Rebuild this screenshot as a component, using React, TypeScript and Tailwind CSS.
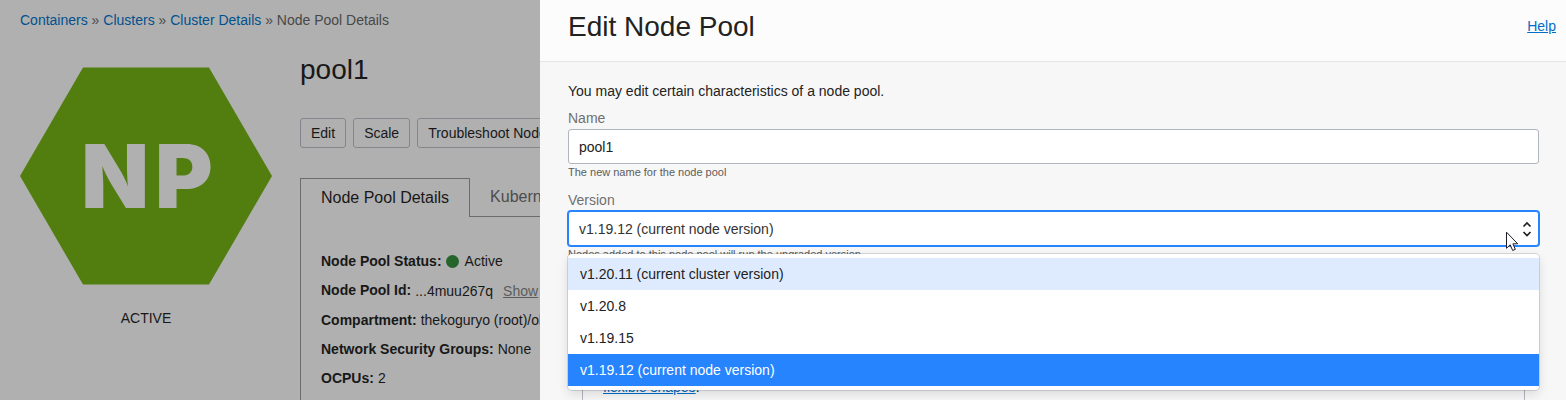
import React, { useState } from "react";

const versions = [
  "v1.20.11 (current cluster version)",
  "v1.20.8",
  "v1.19.15",
  "v1.19.12 (current node version)",
];

function Breadcrumbs() {
  return (
    <nav aria-label="Breadcrumb" className="whitespace-nowrap pl-5 pt-2.5 leading-5 text-[#484848]">
      <a href="#containers" className="text-[#02508e]">Containers</a> »{" "}
      <a href="#clusters" className="text-[#02508e]">Clusters</a> »{" "}
      <a href="#cluster" className="text-[#02508e]">Cluster Details</a> » <span>Node Pool Details</span>
    </nav>
  );
}

function StatusBadge() {
  return (
    <div className="w-[252px] shrink-0 pt-[37px] text-center">
      <svg viewBox="0 0 252 218" className="block w-full">
        <polygon points="63,0.5 189,0.5 252,109 189,217.5 63,217.5 0,109" fill="#527e10" />
        <text
          x="127"
          y="141"
          textAnchor="middle"
          fontFamily="Inter, sans-serif"
          fontWeight="900"
          fontSize="88"
          fill="#b0b0b0"
        >
          N<tspan dx="6">P</tspan>
        </text>
      </svg>
      <p className="mt-[23px] leading-5">ACTIVE</p>
    </div>
  );
}

function ToolButton({ children }: { children: React.ReactNode }) {
  return (
    <button className="h-[30px] shrink-0 whitespace-nowrap rounded-[3px] border border-[#83878c] px-2.5">
      {children}
    </button>
  );
}

function Detail({ label, children }: { label: string; children: React.ReactNode }) {
  return (
    <div className="flex items-center gap-1 whitespace-nowrap leading-[29px]">
      <dt className="font-bold">{label}:</dt>
      <dd className="flex items-center">{children}</dd>
    </div>
  );
}

function PoolPage() {
  return (
    <main className="w-[540px] shrink-0 overflow-hidden bg-[#b0b0b0] text-[#181818]">
      <Breadcrumbs />
      <div className="flex gap-7 pl-5">
        <StatusBadge />
        <div className="flex min-w-0 flex-1 flex-col overflow-hidden pt-[21px]">
          <h1 className="text-[28px] leading-[38px]">pool1</h1>
          <div className="mt-[29px] flex gap-[7px]">
            <ToolButton>Edit</ToolButton>
            <ToolButton>Scale</ToolButton>
            <ToolButton>Troubleshoot Nodes</ToolButton>
          </div>
          <div className="mt-[30px] flex text-base">
            <button className="h-[39px] shrink-0 border border-b-0 border-[#6c6c6c] px-5">Node Pool Details</button>
            <button className="h-[39px] flex-1 whitespace-nowrap border-b border-[#6c6c6c] pl-5 text-left text-[#4c4c4c]">
              Kubernetes Labels
            </button>
          </div>
          <dl className="h-screen border-l border-[#6c6c6c] pl-5 pt-[30px]">
            <Detail label="Node Pool Status">
              <span className="mr-1.5 size-[13px] rounded-full bg-[#25652b]" />
              Active
            </Detail>
            <div className="flex gap-1 whitespace-nowrap">
              <dt className="font-bold leading-[29px]">Node Pool Id:</dt>
              <dd className="flex leading-[30px]">
                ...4muu267q
                <a href="#show" className="ml-2.5 text-[#5c5c5c] underline">Show</a>
              </dd>
            </div>
            <Detail label="Compartment">thekoguryo (root)/oke</Detail>
            <Detail label="Network Security Groups">None</Detail>
            <Detail label="OCPUs">2</Detail>
          </dl>
        </div>
      </div>
    </main>
  );
}

function VersionField() {
  const [version, setVersion] = useState(versions[3]);
  return (
    <div className="mt-[9px]">
      <label htmlFor="version" className="block leading-[22px] text-[#707070]">Version</label>
      <div className="relative">
        <select
          id="version"
          value={version}
          onChange={(e) => setVersion(e.target.value)}
          className="block h-[35px] w-full appearance-none rounded-[3px] border border-[#2684ff] bg-white px-2.5 text-[#333] outline-none ring-1 ring-[#2684ff]"
        >
          {versions.map((v) => (
            <option key={v}>{v}</option>
          ))}
        </select>
        <svg
          viewBox="0 0 10 16"
          className="pointer-events-none absolute right-[7px] top-[10px] h-4 w-2.5"
          fill="none"
          stroke="#222"
          strokeWidth="1.7"
        >
          <path d="M1.500 5.500 5 2l3.500 3.500M1.500 11 5 14.500l3.500-3.500" />
        </svg>
        <ul
          role="listbox"
          aria-label="Version"
          className="absolute inset-x-0 top-[43px] z-10 rounded-[4px] bg-white py-1 leading-8 text-[#222] shadow-[0_0_0_1px_rgba(0,0,0,0.12),0_4px_11px_rgba(0,0,0,0.12)]"
        >
          {versions.map((v, i) => (
            <li
              key={v}
              role="option"
              aria-selected={v === version}
              onClick={() => setVersion(v)}
              className={v === version ? "bg-[#2684ff] px-3 text-white" : i === 0 ? "bg-[#deebff] px-3" : "px-3"}
            >
              {v}
            </li>
          ))}
        </ul>
        <svg viewBox="0 0 14 22" className="pointer-events-none absolute right-5 top-5 z-20 h-[22px] w-3.5">
          <path
            d="M1.500 1.200V17.300L5.200 13.800L7.700 19.500L10.300 18.300L7.900 12.800H12.700Z"
            fill="#fff"
            stroke="#1c1c28"
            strokeWidth="1"
          />
        </svg>
      </div>
      <p className="text-[11px] leading-4 text-[#5c5c5c]">
        Nodes added to this node pool will run the upgraded version.
      </p>
    </div>
  );
}

function EditPanel() {
  return (
    <section aria-label="Edit Node Pool" className="min-w-0 flex-1 overflow-hidden bg-[#f7f7f7] text-[#222]">
      <header className="flex justify-between border-b border-[#e5e5e5] bg-[#fcfcfc] pb-[15px] pl-7 pr-2.5 pt-2">
        <h2 className="text-[28px] leading-[38px]">Edit Node Pool</h2>
        <a href="#help" className="leading-9 text-[#006dc7] underline">Help</a>
      </header>
      <form className="pl-7 pr-[27px] pt-[18px]">
        <p className="leading-[22px]">You may edit certain characteristics of a node pool.</p>
        <label htmlFor="name" className="mt-[5px] block leading-[22px] text-[#707070]">Name</label>
        <input
          id="name"
          defaultValue="pool1"
          className="block h-[35px] w-full rounded-[3px] border border-[#b1b5bd] bg-white px-2.5"
        />
        <p className="text-[11px] leading-4 text-[#5c5c5c]">The new name for the node pool</p>
        <VersionField />
        <div className="mx-3.5 mt-2 h-screen border border-[#b1b5bd] px-5 pt-[105px] leading-[22px]">
          <a href="#shapes" className="text-[#006dc7] underline">flexible shapes</a>.
        </div>
      </form>
    </section>
  );
}

export default function App() {
  return (
    <div className="flex h-screen overflow-hidden font-['Liberation_Sans',Arial,sans-serif] text-sm">
      <PoolPage />
      <EditPanel />
    </div>
  );
}
